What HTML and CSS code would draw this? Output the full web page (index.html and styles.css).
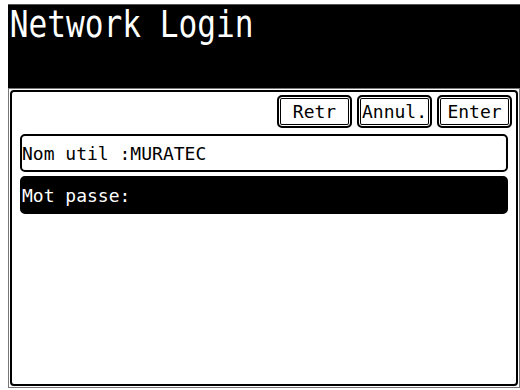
FILE: index.html
```html
<!DOCTYPE html>
<html lang="fr">
<head>
    <meta charset="UTF-8" />
    <title>Network Login</title>
    <link rel="stylesheet" href="styles.css">
</head>
<body>

<div class="screen">
    <header class="title-bar">
        <h1>Network Login</h1>
    </header>

    <section class="panel">
        <div class="panel-inner">
            <div class="actions">
                <button class="key">Retr</button>
                <button class="key">Annul.</button>
                <button class="key">Enter</button>
            </div>

            <div class="field">Nom util :MURATEC</div>
            <div class="field active">Mot passe:</div>
        </div>
    </section>
</div>

</body>
</html>
```

FILE: styles.css
```css
body {
    margin: 0;
    background: #fff;
    font-family: 'DejaVu Sans Mono', 'Liberation Mono', monospace;
    color: #000;
}

.screen {
    width: 512px;
    margin-left: 8px;
    padding-top: 4px;
}

.title-bar {
    background: #000;
    height: 84px;
    border-top: 1px solid #555;
    box-sizing: border-box;
}

.title-bar h1 {
    display: inline-block;
    margin: 0;
    padding-left: 2px;
    color: #fff;
    font-size: 38px;
    font-weight: normal;
    line-height: 1;
    white-space: nowrap;
    transform: scaleX(0.82);
    transform-origin: left top;
}

.panel {
    height: 300px;
    border: 1px solid #777;
    padding: 1px;
    box-sizing: border-box;
}

.panel-inner {
    height: 100%;
    border: 2px solid #000;
    border-radius: 4px;
    box-sizing: border-box;
    padding: 3px 4px 0 8px;
}

.actions {
    display: flex;
    justify-content: flex-end;
    gap: 5px;
}

.key {
    width: 75px;
    height: 33px;
    padding: 0;
    background: #fff;
    border: 2px solid #000;
    border-radius: 5px;
    box-shadow: inset 0 0 0 1px #fff, inset 0 0 0 2px #000;
    font-family: inherit;
    font-size: 18px;
    color: #000;
}

.field {
    display: flex;
    align-items: center;
    height: 38px;
    margin: 6px 4px 0 0;
    border: 2px solid #000;
    border-radius: 5px;
    box-sizing: border-box;
    font-size: 18px;
    white-space: pre;
}

.field.active {
    margin-top: 4px;
    background: #000;
    color: #fff;
}
```
